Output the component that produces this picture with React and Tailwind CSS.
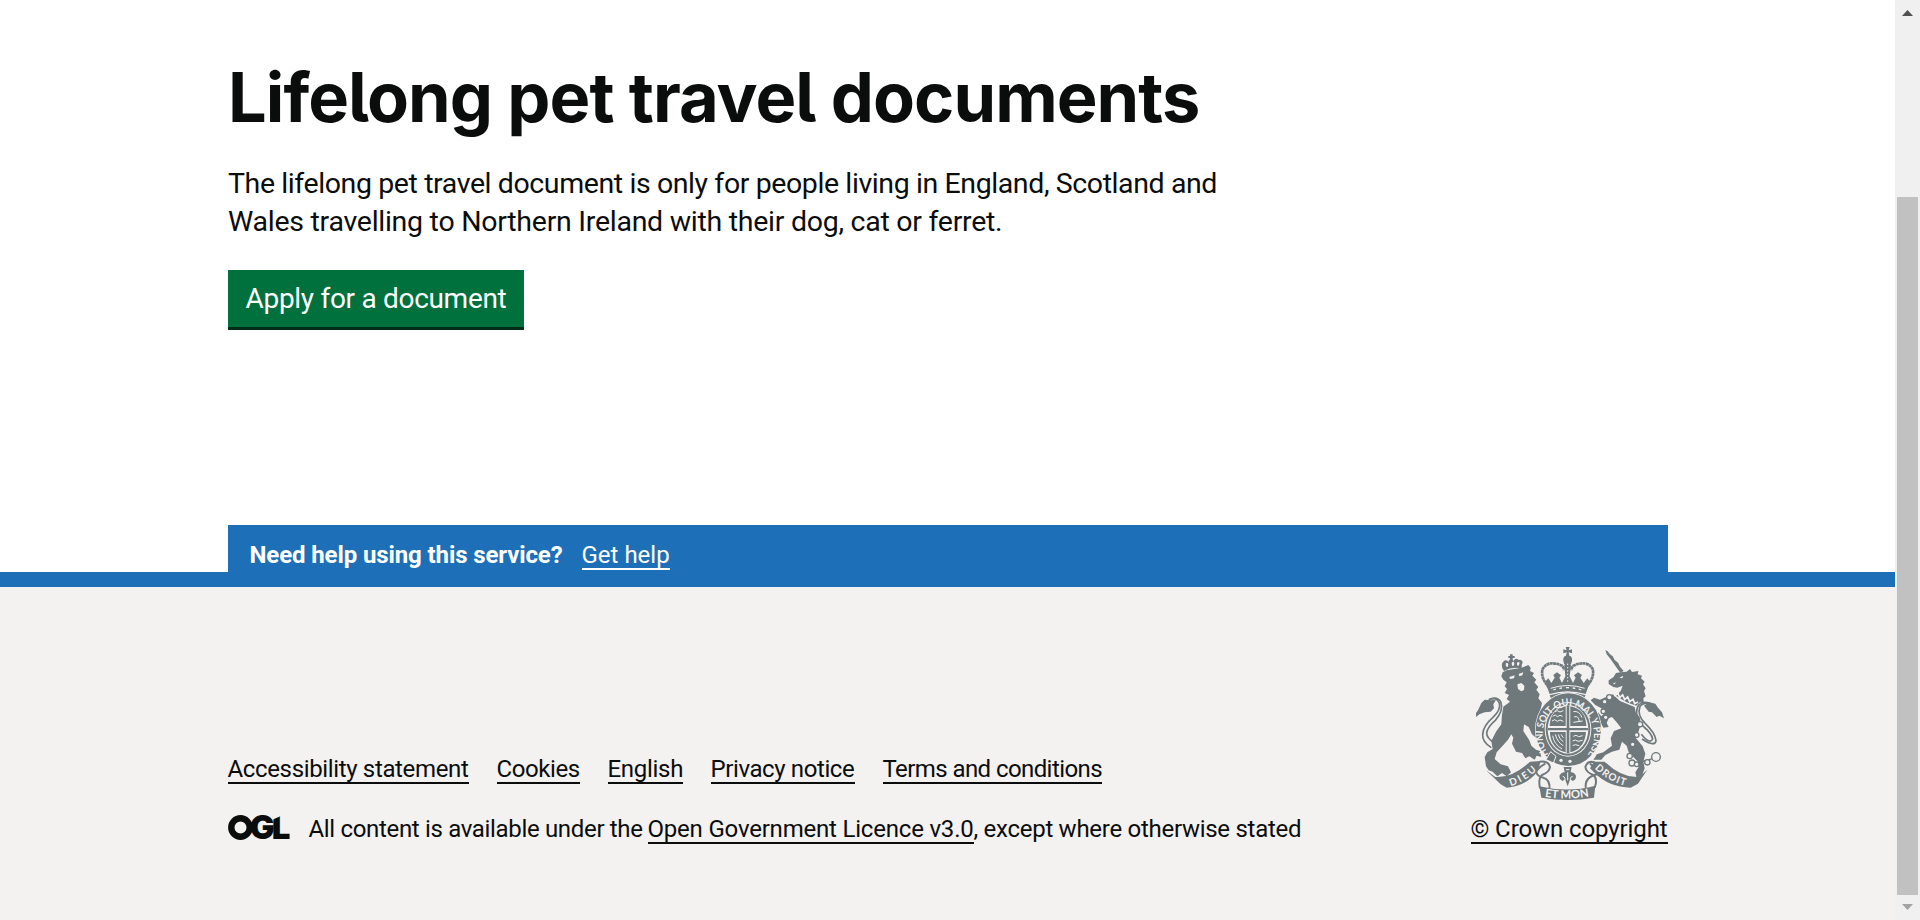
import React from 'react';

const INK = '#6f787b';
const PAPER = '#f3f2f1';

function Bezants({ items }) {
  return items.map(([x, y, r]) => (
    <circle key={`${x}-${y}`} cx={x} cy={y} r={r} fill={PAPER} stroke={INK} strokeWidth="4" />
  ));
}

function Crest() {
  return (
    <svg viewBox="45 33 570 465" className="h-[155px] w-[190px] overflow-visible" role="img" aria-label="Royal coat of arms">
      <defs>
        <path id="garter" d="M266 358 A77 89 0 1 1 384 358" />
        <path id="dieu" d="M152 453 Q196 440 236 401" />
        <path id="droit" d="M404 400 Q444 440 500 453" />
        <path id="mon" d="M254 485 Q322 497 391 483" />
      </defs>

      {/* lion */}
      <g fill={INK}>
        <path d="M127 100 Q123 84 130 80 Q137 72 145 80 Q152 64 160 78 Q168 66 176 75 Q186 72 188 82 Q184 90 185 100 Q156 94 132 108 Z" />
        <path d="M150 58 h8 v5 h6 v6 h-6 v8 h-8 v-8 h-5 v-6 h5 Z" />
        <path d="M128 112 L140 106 L185 98 L205 90 L212 98 L210 108 L222 114 L217 122 L229 134 L223 142 L235 156 L229 164 L239 178 L235 190 L246 204 L242 222 L240 256 L230 266 L232 290 L240 300 L228 308 L216 298 L206 276 L192 268 L190 288 L208 316 L214 332 L228 344 L240 348 L244 366 L230 362 L224 374 L208 364 L196 370 L186 354 L168 350 L156 326 L160 308 L154 298 L144 314 L128 332 L110 352 L104 372 L122 388 L144 394 L153 412 L140 424 L126 414 L112 424 L98 410 L86 406 L78 394 L74 366 L82 352 L98 342 L94 318 L108 290 L124 268 L126 240 L130 215 L150 200 L140 192 L147 180 L134 174 L141 162 L134 154 L140 142 L130 134 L124 124 Z" />
      </g>
      <g fill={PAPER}>
        <path d="M137 86 q5 -7 8 2 l-2 8 q-5 2 -6 -10Z M155 84 q5 -7 8 0 l-1 8 h-6Z M171 83 q6 -5 8 1 l-3 8 -5 -1Z" />
        <path d="M148 126 L164 121 L162 130 L150 132 Z M176 117 L190 112 L187 121 L178 124 Z" />
        <path d="M172 148 L184 144 L193 152 L192 165 L184 169 L174 162 Z" />
      </g>
      <g fill="none" stroke={INK} strokeWidth="5">
        <path d="M94 338 Q66 320 68 298 Q70 272 98 248 Q124 224 118 204 Q108 184 88 194" />
        <path d="M102 322 Q80 310 80 294 Q82 276 106 256 Q132 226 122 200 Q110 182 86 194" />
      </g>
      <path fill={INK} d="M108 194 L92 196 L74 194 L64 204 L54 226 L48 234 L48 246 L58 238 L74 232 L92 230 L102 220 L100 208 Z" />

      {/* unicorn */}
      <g fill={INK}>
        <path d="M436 45 L443 49 L450 58 L458 64 L464 75 L474 83 L480 95 L491 108 L481 113 L470 98 L460 84 L450 70 L440 58 Z" />
        <path d="M482 112 L500 110 L510 102 L516 111 L535 108 L533 118 L546 122 L543 130 L554 140 L549 148 L557 160 L552 168 L557 184 L550 190 L552 206 L540 202 L529 212 L500 202 L468 182 L482 168 L488 152 L472 158 L460 156 L446 147 L446 136 L460 127 L468 114 Z" />
        <path d="M458 178 L480 198 L524 216 L527 232 L540 248 L542 270 L536 288 L528 310 L548 334 L556 356 L550 380 L554 400 L546 422 L530 430 L526 412 L536 396 L534 380 L506 352 L500 332 L486 320 L478 344 L456 350 L436 360 L424 374 L400 374 L410 358 L430 352 L456 332 L452 310 L462 288 L484 280 L470 262 L456 246 L446 250 L440 264 L446 276 L430 278 L418 256 L406 244 L414 232 L424 244 L434 234 L424 220 L406 210 L392 196 L402 188 L420 194 L438 186 Z" />
      </g>
      <path d="M463 183 L474 175 L479 188 L488 180 L494 194 L503 186 L509 200 L519 193 L524 206 L534 201" fill="none" stroke={PAPER} strokeWidth="5" />
      <path d="M478 128 L490 122 L487 130 Z M458 146 L468 142 L464 148 Z" fill={PAPER} />
      <g fill="none" stroke={INK} strokeWidth="5">
        <path d="M546 312 Q586 338 588 316 Q584 292 556 266 Q530 240 540 214 Q550 200 568 208" />
        <path d="M544 298 Q570 330 578 312 Q574 294 552 276 Q518 240 536 210 Q550 196 572 206" />
      </g>
      <path fill={INK} d="M552 212 L568 202 L586 206 L594 218 L606 232 L612 250 L598 242 L590 246 L576 232 L566 230 Z" />
      <path d="M534 384 L580 370" stroke={INK} strokeWidth="4" />
      <Bezants items={[[448, 187, 8], [434, 200, 7], [430, 229, 7], [437, 247, 7], [540, 268, 8], [530, 300, 7], [518, 328, 7], [509, 363, 8], [516, 384, 9], [530, 388, 7], [562, 382, 8], [588, 366, 13]]} />

      {/* crown */}
      <g fill={INK}>
        <path d="M317 36 h12 l-3 10 l10 -3 v12 l-10 -3 l2 10 q10 2 8 16 q-2 10 -7 14 h-12 q-6 -4 -7 -14 q-2 -14 8 -16 l2 -10 l-10 3 v-12 l10 3 Z" />
        <path d="M265 130 L274 144 L284 128 L280 120 L291 112 L303 121 L298 128 L306 144 L316 124 L313 90 h20 L329 124 L339 144 L347 128 L342 121 L354 112 L366 120 L361 128 L371 144 L382 130 L390 140 L377 177 Q323 160 269 177 L255 140 Z" />
        <path d="M269 181 Q323 164 377 181 L372 190 Q323 176 273 190 Z" />
      </g>
      <path
        d="M268 158 Q240 128 248 102 Q264 74 306 92 Q312 98 312 106 M377 158 Q405 128 398 102 Q382 74 340 92 Q334 98 334 106"
        fill="none"
        stroke={INK}
        strokeWidth="8"
        strokeDasharray="9 1"
      />
      <path d="M272 160 Q323 143 374 160" fill="none" stroke={PAPER} strokeWidth="3" />
      <path d="M280 165 l8 -3 m10 -2 l8 -1 m12 -1 h9 m11 1 l8 1 m10 2 l8 3" stroke={PAPER} strokeWidth="4" />
      <path d="M323 86 v56" stroke={PAPER} strokeWidth="3" strokeDasharray="4 6" />

      {/* garter and shield */}
      <ellipse cx="325" cy="284" rx="100" ry="112" fill={PAPER} />
      <ellipse cx="325" cy="284" rx="98" ry="109" fill={INK} />
      <ellipse cx="324" cy="283" rx="70" ry="82" fill={PAPER} />
      <ellipse cx="324" cy="283" rx="67" ry="79" fill={INK} />
      <ellipse cx="324" cy="283" rx="61" ry="73" fill={PAPER} />
      <g fill={INK}>
        <path d="M269 271 Q272 222 317 214 V273 H269 Z" />
        <path d="M331 214 Q376 222 379 271 V273 H331 Z" />
        <path d="M270 291 H317 V352 Q274 341 270 296 Z" />
        <path d="M331 291 H378 Q374 341 331 352 Z" />
        <path d="M320 211 h8 v144 h-8 Z M264 279 h120 v7 h-120 Z" />
      </g>
      <g fill="none" stroke={PAPER} strokeWidth="3">
        <path d="M278 244 l8 -4 6 5 8 -4 8 3 M276 258 l8 -4 8 5 8 -4 10 4 M284 230 l8 -3 8 4 10 -4" />
        <path d="M340 304 l8 -3 8 4 12 -3 M338 318 l8 -3 8 4 14 -3 M338 332 l8 -3 12 3" />
        <path d="M340 230 q18 -4 26 18 M342 246 q14 -6 16 14 M340 262 l28 -4" />
      </g>
      <path d="M278 302 Q282 328 306 342 M286 298 Q292 322 310 332 M295 298 Q298 314 310 320 M303 298 L310 308" fill="none" stroke={PAPER} strokeWidth="3" />
      <path d="M258 374 L272 350 L288 364 L280 384 Z" fill={INK} stroke={PAPER} strokeWidth="3" />
      <circle cx="303" cy="376" r="5" fill={PAPER} />
      <circle cx="330" cy="379" r="5" fill={PAPER} />
      <text className="font-['Lato'] text-[30px] font-bold" fill={PAPER}>
        <textPath href="#garter" textLength="384" lengthAdjust="spacingAndGlyphs">HONI SOIT QUI MAL Y PENSE</textPath>
      </text>

      {/* pendant */}
      <path fill={INK} d="M311 396 h24 l-3 16 q9 -2 15 8 q4 14 -9 18 l-7 -6 l-8 22 l-8 -22 l-7 6 q-12 -4 -9 -18 q7 -10 15 -8 Z" />
      <path d="M318 404 h10 M323 412 v24 M308 424 q6 0 8 9 M338 424 q-6 0 -8 9" stroke={PAPER} strokeWidth="3" fill="none" />

      {/* motto ribbon */}
      <g fill={INK}>
        <path d="M78 406 L106 426 Q156 430 210 380 L242 378 L234 408 Q198 454 140 458 L122 448 Z" />
        <path d="M402 380 L434 380 Q486 430 538 426 L562 404 L534 446 L512 458 Q446 456 404 414 L390 400 Z" />
        <path d="M238 454 Q322 474 406 452 L402 488 Q322 502 244 488 Z" />
      </g>
      <g fill="none" stroke={INK} strokeWidth="6">
        <path d="M238 380 Q266 376 270 396 Q268 412 246 420 Q234 430 240 460" />
        <path d="M228 408 Q230 424 250 428 Q272 434 268 464 M256 386 Q240 394 230 406" />
        <path d="M404 382 Q382 376 376 396 Q378 412 400 420 Q414 432 404 458" />
        <path d="M414 418 Q396 420 384 432 Q374 444 378 464 M390 386 Q404 396 412 410" />
      </g>
      <g className="font-['Lato'] text-[30px] font-bold" fill={PAPER}>
        <text>
          <textPath href="#dieu" textLength="92" lengthAdjust="spacing">DIEU</textPath>
        </text>
        <text>
          <textPath href="#droit" textLength="106" lengthAdjust="spacing">DROIT</textPath>
        </text>
        <text className="text-[34px]">
          <textPath href="#mon" textLength="134" lengthAdjust="spacing">ET MON</textPath>
        </text>
      </g>
    </svg>
  );
}

function OglLogo() {
  return (
    <svg viewBox="0 0 61 25" className="h-[25px] w-[61px] shrink-0 overflow-visible">
      <circle cx="12.5" cy="12.5" r="9.2" fill="none" stroke="#0b0c0c" strokeWidth="6.4" />
      <text y="24.2" className="font-['Inter'] text-[33px] font-black" fill="#0b0c0c">
        <tspan x="21.8">G</tspan>
        <tspan x="43.8">L</tspan>
      </text>
      <path d="M45 -1 H55 V0 L45 4.5 Z" fill={PAPER} />
    </svg>
  );
}

function FooterLink({ className, children }) {
  return (
    <a href="#" className={`block h-[25px] border-b-2 border-[#0b0c0c] leading-[21px] whitespace-nowrap ${className}`}>
      {children}
    </a>
  );
}

function Scrollbar() {
  return (
    <div className="flex w-[25px] shrink-0 flex-col items-center bg-[#f0f0f0]">
      <svg viewBox="0 0 11 6" className="mt-[10px] h-[6px] w-[11px]"><path d="M5.5 0 11 6H0Z" fill="#505050" /></svg>
      <div className="mt-[181px] h-[698px] w-[21px] bg-[#c1c1c1]" />
      <svg viewBox="0 0 11 6" className="mt-[9px] h-[6px] w-[11px]"><path d="M5.5 6 11 0H0Z" fill="#a3a3a3" /></svg>
    </div>
  );
}

export default function App() {
  return (
    <div className="flex h-[920px] w-[1920px] overflow-hidden bg-white font-['Roboto',sans-serif] text-[#0b0c0c]">
      <div className="flex min-w-0 flex-1 flex-col">
        <main className="h-[525px] pt-[63px] pl-[228px]">
          <h1 className="font-['Inter',sans-serif] text-[68.5px] leading-[70px] font-bold tracking-[-0.95px] whitespace-nowrap [font-feature-settings:'cv05']">
            Lifelong pet travel documents
          </h1>
          <p className="mt-[32px] text-[28.5px] leading-[38px] whitespace-nowrap">
            <span className="block tracking-[-0.4px]">The lifelong pet travel document is only for people living in England, Scotland and</span>
            <span className="block tracking-[-0.27px]">Wales travelling to Northern Ireland with their dog, cat or ferret.</span>
          </p>
          <button className="mt-[29px] flex h-[57px] w-[296px] items-center justify-center bg-[#00703c] text-[28px] tracking-[-0.3px] whitespace-nowrap text-white shadow-[0_3px_0_#002d18]">
            Apply for a document
          </button>
        </main>

        <div className="mx-auto flex h-[47px] w-[1440px] items-start bg-[#1d70b8] pt-[20px] pl-[22px] text-[24px] leading-[21px] whitespace-nowrap text-white">
          <strong className="w-[332px] font-bold tracking-[-0.11px]">Need help using this service?</strong>
          <a href="#" className="block h-[25px] w-[88px] border-b-2 border-white">Get help</a>
        </div>
        <div className="h-[15px] bg-[#1d70b8]" />

        <footer className="flex-1 bg-[#f3f2f1] pt-[59px] text-[24px]">
          <div className="mx-auto flex w-[1440px] items-start justify-between">
            <div className="pt-[113px]">
              <nav className="flex gap-[28px]">
                <FooterLink className="w-[241px] tracking-[-0.35px]">Accessibility statement</FooterLink>
                <FooterLink className="w-[83px] tracking-[-0.4px]">Cookies</FooterLink>
                <FooterLink className="w-[75px] tracking-[-0.3px]">English</FooterLink>
                <FooterLink className="w-[144px] tracking-[-0.4px]">Privacy notice</FooterLink>
                <FooterLink className="w-[219px] tracking-[-0.58px]">Terms and conditions</FooterLink>
              </nav>
              <div className="mt-[31px] flex items-start whitespace-nowrap">
                <OglLogo />
                <div className="ml-[20px] flex pt-[4px]">
                  <span className="w-[339px] leading-[21px] tracking-[-0.33px]">All content is available under the</span>
                  <FooterLink className="w-[326px] tracking-[-0.2px]">Open Government Licence v3.0</FooterLink>
                  <span className="leading-[21px] tracking-[-0.28px]">, except where otherwise stated</span>
                </div>
              </div>
            </div>
            <div className="flex flex-col items-end">
              <div className="mr-[3px]"><Crest /></div>
              <FooterLink className="mt-[18px] w-[197px] tracking-[-0.1px]">© Crown copyright</FooterLink>
            </div>
          </div>
        </footer>
      </div>
      <Scrollbar />
    </div>
  );
}
